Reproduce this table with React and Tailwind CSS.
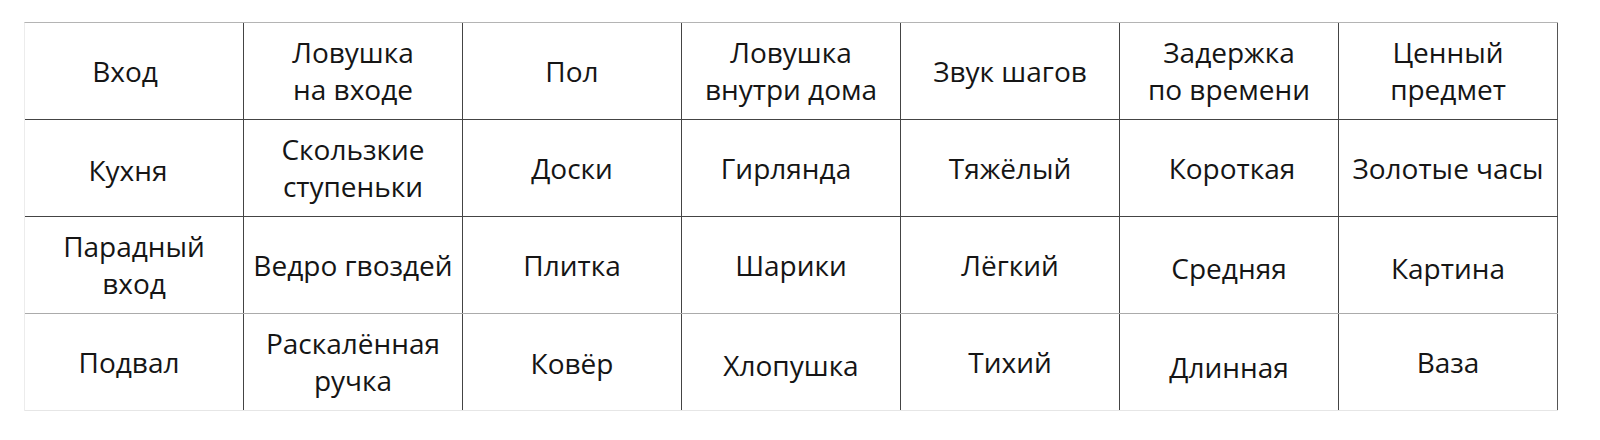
const rows = [
  ['Вход', 'Ловушка\nна входе', 'Пол', 'Ловушка\nвнутри дома', 'Звук шагов', 'Задержка\nпо времени', 'Ценный\nпредмет'],
  ['Кухня', 'Скользкие\nступеньки', 'Доски', 'Гирлянда', 'Тяжёлый', 'Короткая', 'Золотые часы'],
  ['Парадный\nвход', 'Ведро гвоздей', 'Плитка', 'Шарики', 'Лёгкий', 'Средняя', 'Картина'],
  ['Подвал', 'Раскалённая\nручка', 'Ковёр', 'Хлопушка', 'Тихий', 'Длинная', 'Ваза'],
]

// small nudges so the cells sit like the original hand-made table
const nudge = {
  'Вход': 'pr-[18px]',
  'Кухня': 'pr-[12px] pt-[4px]',
  'Подвал': 'pr-[10px]',
  'Гирлянда': 'pr-[10px]',
  'Короткая': 'pl-[6px]',
  'Средняя': 'pt-[6px]',
  'Картина': 'pt-[6px]',
  'Хлопушка': 'pt-[6px]',
  'Длинная': 'pt-[10px]',
  'Ковёр': 'pt-[2px]',
}

const rowBorders = [
  'border-b border-b-[#444]',
  'border-b border-b-[#444]',
  'border-b border-b-[#ababab]',
  'border-b border-b-[#e6e6e6]',
]

export default function App() {
  return (
    <div className="min-h-screen w-[1600px] h-[440px] bg-white pt-[22px] pl-[24px] font-['Open_Sans',sans-serif] text-[#151515]">
      <div className="w-[1534px] border-t border-t-[#b4b4b4] border-l border-l-[#ececec]">
        {rows.map((row, r) => (
          <div key={r} className={`grid grid-cols-7 h-[97px] ${rowBorders[r]}`}>
            {row.map((cell, c) => (
              <div
                key={c}
                className={`flex items-center justify-center text-center text-[28px] leading-[37px] whitespace-pre-line ${nudge[cell] || ''} ${c < 6 ? 'border-r border-r-[#444]' : 'border-r border-r-[#555]'}`}
              >
                {cell}
              </div>
            ))}
          </div>
        ))}
      </div>
    </div>
  )
}
